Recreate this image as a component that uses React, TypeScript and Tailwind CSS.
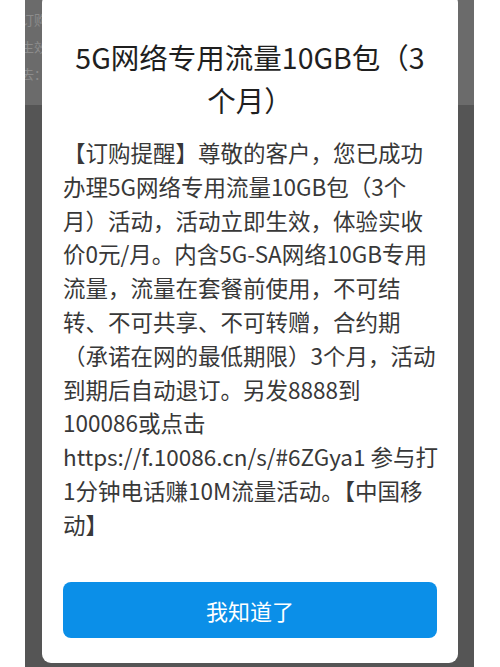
import React from "react";

const bodyLines = [
  "【订购提醒】尊敬的客户，您已成功",
  "办理5G网络专用流量10GB包（3个",
  "月）活动，活动立即生效，体验实收",
  "价0元/月。内含5G-SA网络10GB专用",
  "流量，流量在套餐前使用，不可结",
  "转、不可共享、不可转赠，合约期",
  "（承诺在网的最低期限）3个月，活动",
  "到期后自动退订。另发8888到",
  "100086或点击",
  "https://f.10086.cn/s/#6ZGya1 参与打",
  "1分钟电话赚10M流量活动。【中国移",
  "动】",
];

export default function App() {
  return (
    <div
      className="flex h-[667px] w-[500px] overflow-hidden bg-white"
      style={{ fontFamily: '"Noto Sans CJK SC", "Noto Sans", sans-serif' }}
    >
      <div className="w-[25px] shrink-0" />
      <div className="relative w-[449px] shrink-0 overflow-hidden bg-[#555555]">
        <div className="h-[105px] overflow-hidden bg-[#6b6b6b] pt-[6px]">
          <div className="-ml-[4px] flex flex-col text-[13px] leading-[27px] text-[#8c8c8c]">
            <span className="whitespace-nowrap">订购成功</span>
            <span className="whitespace-nowrap">生效时间</span>
            <span className="whitespace-nowrap">去：</span>
          </div>
        </div>
        <div className="absolute left-[17px] top-[-6px] flex h-[669px] w-[416px] flex-col rounded-[9px] bg-white px-[21px] pt-[41px] pb-[25px]">
          <div className="text-center text-[28.5px] leading-[43px] text-[#1f1f1f]">
            <div className="whitespace-nowrap">5G网络专用流量10GB包（3</div>
            <div className="whitespace-nowrap">个月）</div>
          </div>
          <div className="mt-[15px] text-[22.5px] leading-[33.8px] text-[#383838]">
            {bodyLines.map((l, i) => (
              <div key={i} className="whitespace-nowrap">
                {l}
              </div>
            ))}
          </div>
          <div className="flex-1" />
          <button className="flex h-[56px] w-full items-center justify-center rounded-[8px] bg-[#0b8fe8] text-[22px] text-white">
            我知道了
          </button>
        </div>
      </div>
    </div>
  );
}
